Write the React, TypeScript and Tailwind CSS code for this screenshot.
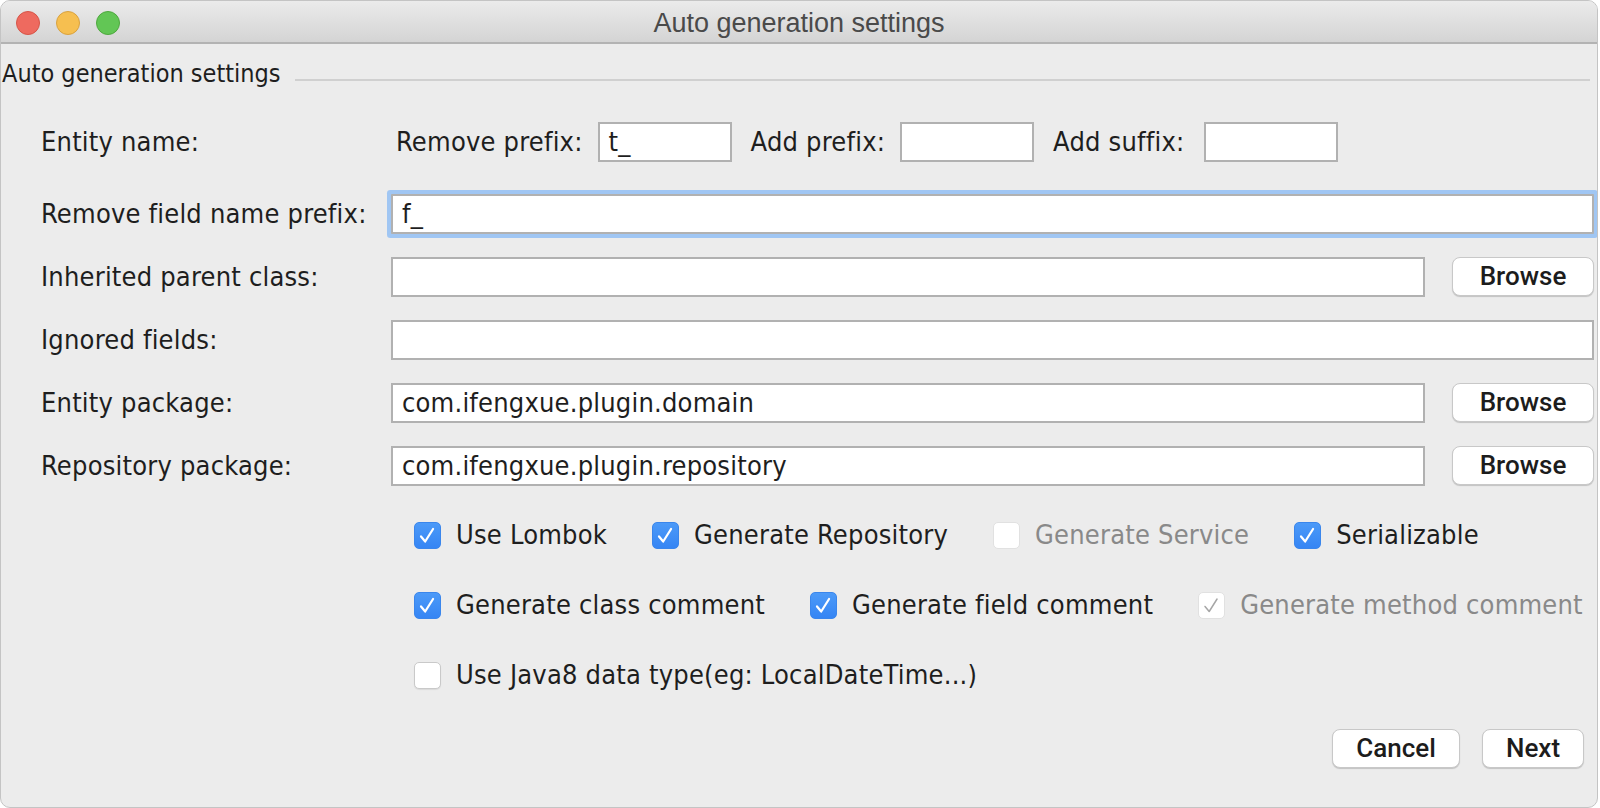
import React from 'react';

const labelFont = "font-['DejaVu_Sans_Condensed','DejaVu_Sans',sans-serif] text-[27px] tracking-[0.2px] whitespace-nowrap text-[#1e1e1e]";

function TextInput({ value = '', focused = false, className = '' }: { value?: string; focused?: boolean; className?: string }) {
  return (
    <div
      className={`h-[40px] bg-white border-2 border-[#b1b1b1] flex items-center pl-[9px] ${labelFont} ${
        focused ? 'rounded-[1px] shadow-[0_0_0_4px_#a0c6f3]' : ''
      } ${className}`}
    >
      {value}
    </div>
  );
}

function MacButton({ label, className = '' }: { label: string; className?: string }) {
  return (
    <button
      className={`h-[39px] bg-white border border-[#c8c8c8] rounded-[8px] shadow-[0_1px_1px_rgba(0,0,0,0.18)] font-['Roboto',sans-serif] font-medium text-[26px] text-[#1c1c1c] flex items-center justify-center ${className}`}
    >
      {label}
    </button>
  );
}

function CheckBox({ label, checked, disabled }: { label: string; checked?: boolean; disabled?: boolean }) {
  const boxClass = checked && !disabled
    ? 'bg-gradient-to-b from-[#4c9af8] to-[#3585f4] border border-[#3a86ec]'
    : disabled
    ? 'bg-white border border-[#e1e1e1]'
    : 'bg-white border border-[#c9c9c9] shadow-[0_1px_1px_rgba(0,0,0,0.08)]';
  return (
    <div className="flex items-center gap-[15px] shrink-0">
      <span className={`w-[27px] h-[27px] rounded-[5px] flex items-center justify-center ${boxClass}`}>
        {checked && (
          <svg width="27" height="27" viewBox="0 0 27 27">
            <polyline
              points="6.5,14.5 11,20 19.5,6.5"
              fill="none"
              stroke={disabled ? '#a6a6a6' : '#ffffff'}
              strokeWidth={disabled ? 1.6 : 2.4}
              strokeLinecap="round"
              strokeLinejoin="round"
            />
          </svg>
        )}
      </span>
      <span className={`${labelFont} ${disabled ? 'text-[#898989]' : ''}`}>{label}</span>
    </div>
  );
}

export default function App() {
  const fieldRows = [
    { label: 'Remove field name prefix:', value: 'f_', focused: true, browse: false },
    { label: 'Inherited parent class:', value: '', browse: true },
    { label: 'Ignored fields:', value: '', browse: false },
    { label: 'Entity package:', value: 'com.ifengxue.plugin.domain', browse: true },
    { label: 'Repository package:', value: 'com.ifengxue.plugin.repository', browse: true },
  ];

  return (
    <div className="w-[1600px] h-[808px] bg-white overflow-hidden">
      <div className="w-[1598px] h-[808px] bg-[#ececec] border border-[#c4c4c4] rounded-[10px] overflow-hidden flex flex-col">
        {/* Title bar */}
        <div className="h-[43px] shrink-0 bg-gradient-to-b from-[#ebebeb] to-[#d4d4d4] border-b-2 border-[#b3b3b3] grid grid-cols-[1fr_auto_1fr] items-center">
          <div className="flex items-center gap-[16px] pl-[15px] pt-[2px]">
            <span className="w-[24px] h-[24px] rounded-full bg-[#ee6a5f] border border-[#d65548]" />
            <span className="w-[24px] h-[24px] rounded-full bg-[#f6bf50] border border-[#d9a23f]" />
            <span className="w-[24px] h-[24px] rounded-full bg-[#62c655] border border-[#4ea83e]" />
          </div>
          <div className="font-['Liberation_Sans',sans-serif] text-[27px] text-[#4a4a4a] leading-none pt-[3px]">Auto generation settings</div>
          <div />
        </div>

        {/* Group header */}
        <div className="flex pt-[16px]">
          <span className="font-['DejaVu_Sans_Condensed','DejaVu_Sans',sans-serif] text-[25px] text-[#1e1e1e] leading-[28px] pl-[1px]">
            Auto generation settings
          </span>
          <span className="flex-1 h-[2px] bg-[#d0d0d0] self-end mb-[7px] ml-[14px] mr-[7px]" />
        </div>

        {/* Entity name row */}
        <div className="grid grid-cols-[350px_1fr] items-center pl-[40px] mt-[34px]">
          <span className={labelFont}>Entity name:</span>
          <div className="flex items-center gap-[15px] pl-[5px]">
            <span className={labelFont}>Remove prefix:</span>
            <TextInput value="t_" className="w-[134px]" />
            <span className={`${labelFont} ml-[4px]`}>Add prefix:</span>
            <TextInput className="w-[134px]" />
            <span className={`${labelFont} ml-[4px]`}>Add suffix:</span>
            <TextInput className="w-[134px] ml-[5px]" />
          </div>
        </div>

        {/* Field rows */}
        <div className="grid grid-cols-[350px_1fr_169px] gap-y-[22.5px] items-center pl-[40px] pr-[3px] mt-[31px]">
          {fieldRows.map((row) => (
            <React.Fragment key={row.label}>
              <span className={labelFont}>{row.label}</span>
              <TextInput
                value={row.value}
                focused={row.focused}
                className={row.browse ? '' : 'col-span-2'}
              />
              {row.browse && <MacButton label="Browse" className="w-[142px] justify-self-end" />}
            </React.Fragment>
          ))}
        </div>

        {/* Options */}
        <div className="flex flex-col gap-[30px] pl-[413px] mt-[29px]">
          <div className="h-[40px] flex items-center gap-[45px]">
            <CheckBox label="Use Lombok" checked />
            <CheckBox label="Generate Repository" checked />
            <CheckBox label="Generate Service" disabled />
            <CheckBox label="Serializable" checked />
          </div>
          <div className="h-[40px] flex items-center gap-[45px]">
            <CheckBox label="Generate class comment" checked />
            <CheckBox label="Generate field comment" checked />
            <CheckBox label="Generate method comment" checked disabled />
          </div>
          <div className="h-[40px] flex items-center gap-[45px]">
            <CheckBox label="Use Java8 data type(eg: LocalDateTime...)" />
          </div>
        </div>

        {/* Footer buttons */}
        <div className="flex justify-end gap-[22px] pr-[13px] mt-[34px]">
          <MacButton label="Cancel" className="w-[128px]" />
          <MacButton label="Next" className="w-[102px]" />
        </div>
      </div>
    </div>
  );
}
